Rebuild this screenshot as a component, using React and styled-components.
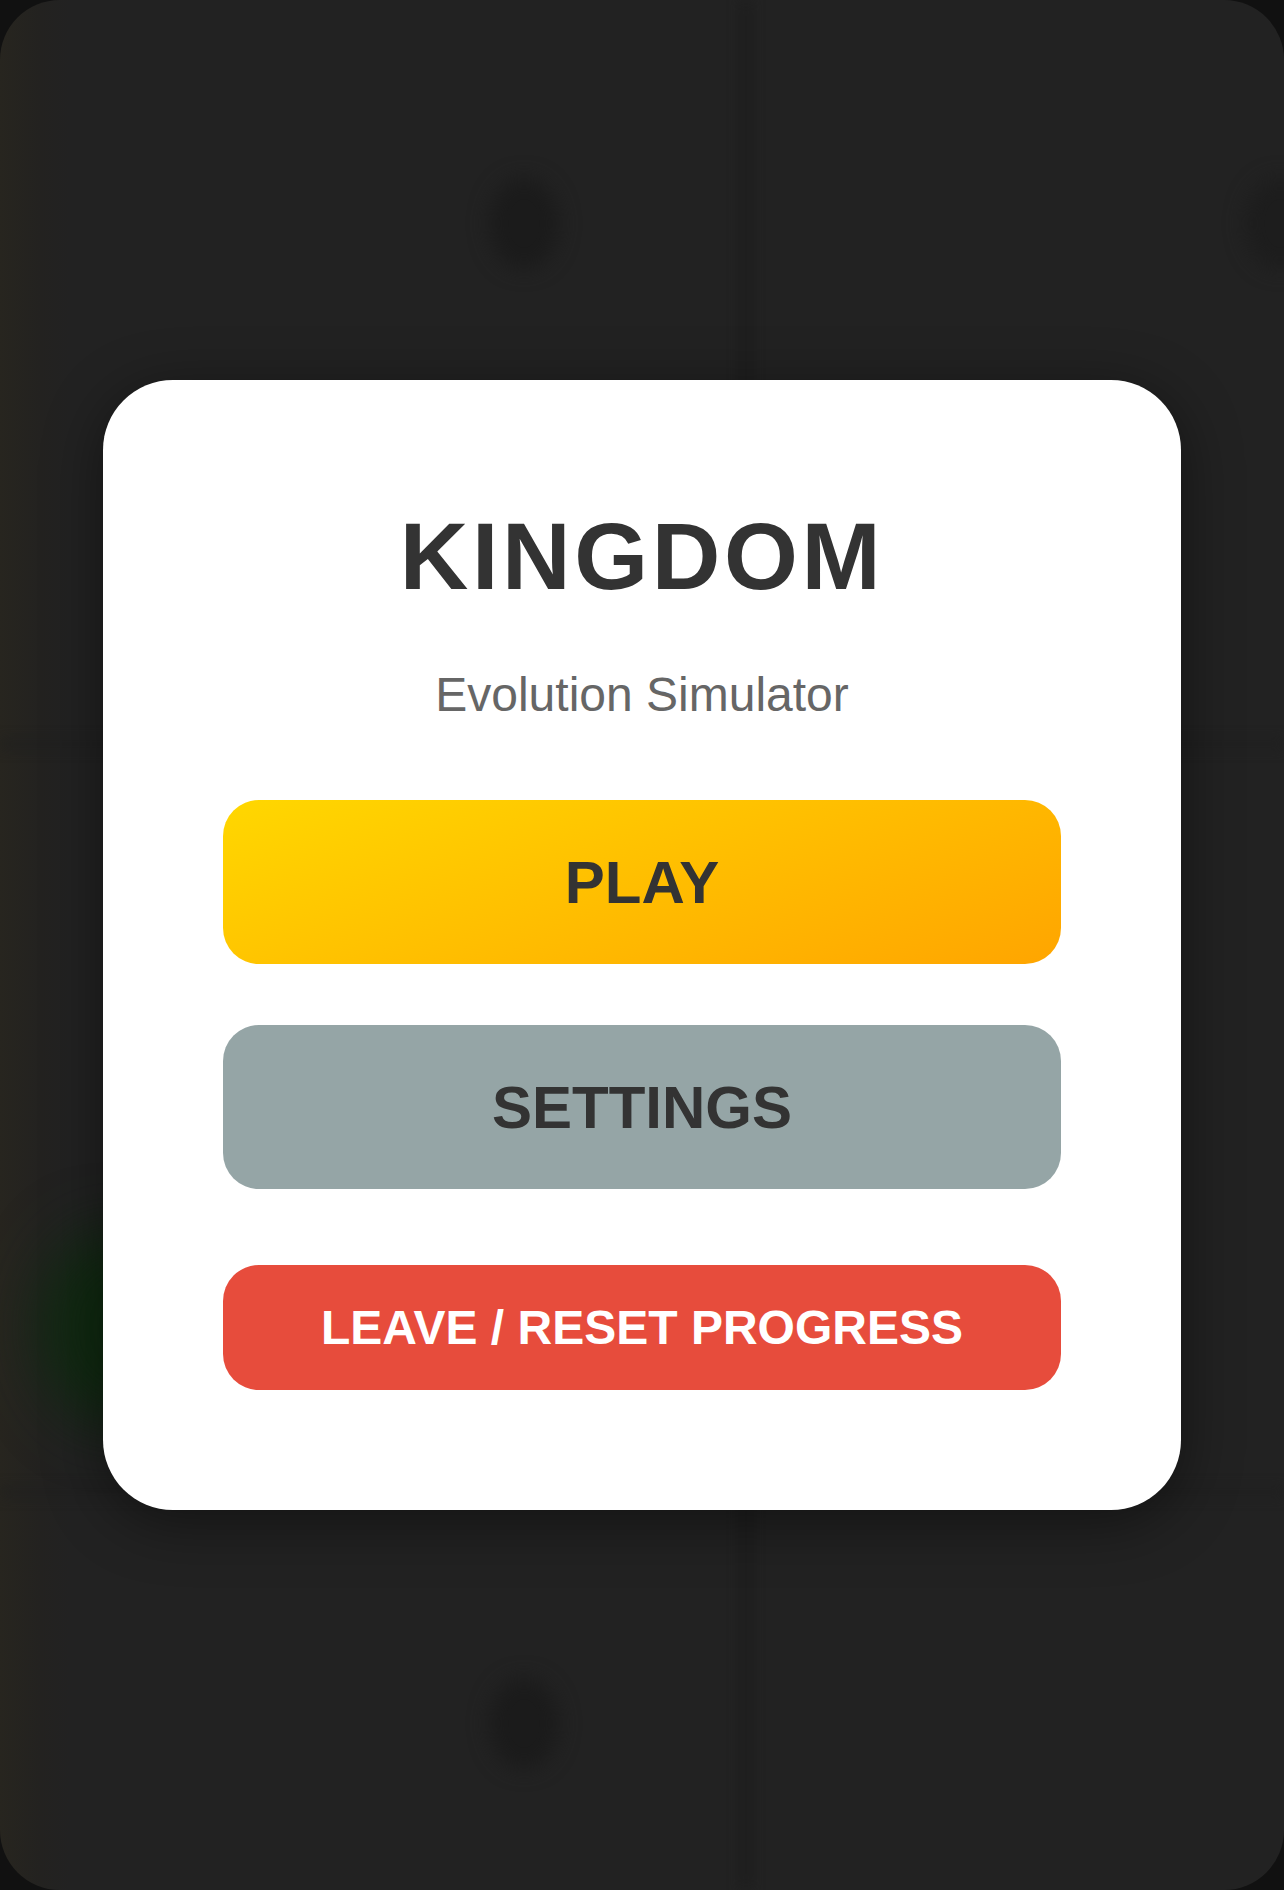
import styled, { createGlobalStyle } from 'styled-components';

const GlobalStyle = createGlobalStyle`
  * {
    box-sizing: border-box;
  }
  body {
    margin: 0;
    background: #111;
    font-family: 'Liberation Sans', Arial, sans-serif;
  }
`;

const Screen = styled.div`
  position: relative;
  height: 1890px;
  border-radius: 60px;
  overflow: hidden;
  background: linear-gradient(90deg, #27251f 0, #232220 40px, #222 70px);
`;

// the game board sits behind the menu, blurred out
const Board = styled.div`
  position: absolute;
  inset: 0;
  display: grid;
  grid-template-columns: 750px 1fr;
  grid-template-rows: 747px 748px 1fr;
  filter: blur(7px);
`;

const Cell = styled.div`
  border-right: ${({ $right }) => ($right ? '8px solid #1c1c1c' : 'none')};
  border-bottom: ${({ $bottom }) => ($bottom ? '6px solid #1e1e1e' : 'none')};
`;

const Token = styled.div`
  position: absolute;
  width: ${({ $size }) => $size}px;
  height: ${({ $size }) => $size * 1.3}px;
  border-radius: 50%;
  background: ${({ $color }) => $color};
  filter: blur(${({ $blur }) => $blur}px);
`;

const Overlay = styled.div`
  position: absolute;
  inset: 0;
  display: flex;
  align-items: center;
  justify-content: center;
`;

const Card = styled.div`
  width: 84%;
  background: #fff;
  border-radius: 70px;
  padding: 123px 120px 120px;
  display: flex;
  flex-direction: column;
  align-items: stretch;
  text-align: center;
  box-shadow: 0 12px 60px rgba(0, 0, 0, 0.45);
`;

const Title = styled.h1`
  margin: 0 0 57px;
  font-size: 95px;
  line-height: 107px;
  font-weight: 700;
  letter-spacing: 3.6px;
  color: #333;
`;

const Subtitle = styled.p`
  margin: 0 0 78px;
  font-size: 48px;
  line-height: 55px;
  color: #666;
`;

const Button = styled.button`
  display: flex;
  align-items: center;
  justify-content: center;
  width: 100%;
  height: ${({ $small }) => ($small ? 125 : 164)}px;
  margin-top: ${({ $gap }) => $gap || 0}px;
  border: none;
  border-radius: 36px;
  background: ${({ $bg }) => $bg};
  color: ${({ $fg }) => $fg};
  font-family: 'Liberation Sans', Arial, sans-serif;
  font-size: ${({ $small }) => ($small ? 48 : 60)}px;
  font-weight: 700;
  cursor: pointer;
`;

export default function App() {
  return (
    <>
      <GlobalStyle />
      <Screen>
        <Board>
          <Cell $right $bottom />
          <Cell $bottom />
          <Cell $right $bottom />
          <Cell $bottom />
          <Cell $right />
          <Cell />
        </Board>
        <Token $size={70} $color="#1b1b1b" $blur={10} style={{ left: 489, top: 178 }} />
        <Token $size={70} $color="#1b1b1b" $blur={10} style={{ left: 489, top: 1678 }} />
        <Token $size={70} $color="#1d1d1d" $blur={10} style={{ left: 1245, top: 178 }} />
        <Token $size={150} $color="#0f2a10" $blur={30} style={{ left: 40, top: 1230 }} />
        <Overlay>
          <Card>
            <Title>KINGDOM</Title>
            <Subtitle>Evolution Simulator</Subtitle>
            <Button $bg="linear-gradient(160deg, #ffd700 0%, #ffa500 100%)" $fg="#333">
              PLAY
            </Button>
            <Button $bg="#95a5a6" $fg="#333" $gap={61}>
              SETTINGS
            </Button>
            <Button $bg="#e74c3c" $fg="#fff" $gap={76} $small>
              LEAVE / RESET PROGRESS
            </Button>
          </Card>
        </Overlay>
      </Screen>
    </>
  );
}
